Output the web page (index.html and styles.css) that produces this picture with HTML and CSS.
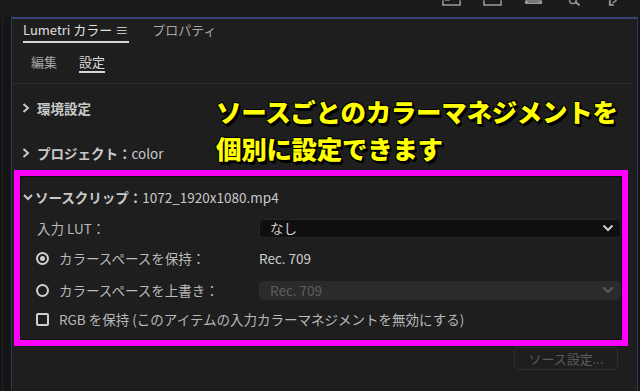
FILE: index.html
```html
<!DOCTYPE html>
<html lang="ja">
<head>
<meta charset="utf-8">
<link rel="stylesheet" href="styles.css">
</head>
<body>
<div class="topbar">
  <svg class="ticon" width="20" height="6" viewBox="0 0 20 6"><path d="M1 0V5H19V0" fill="none" stroke="#9a9a9a" stroke-width="1.6"/><path d="M3 0H8" stroke="#9a9a9a" stroke-width="1.2"/></svg>
  <svg class="ticon" width="20" height="6" viewBox="0 0 20 6"><path d="M1 0V5H19V0" fill="none" stroke="#9a9a9a" stroke-width="1.6"/></svg>
  <svg class="ticon" width="20" height="6" viewBox="0 0 20 6"><rect x="1" y="0" width="18" height="4" rx="1" fill="#9a9a9a"/><path d="M4 2H16" stroke="#555" stroke-width="1"/></svg>
  <svg class="ticon" width="14" height="6" viewBox="0 0 14 6"><circle cx="4" cy="0" r="3.5" fill="none" stroke="#9a9a9a" stroke-width="1.6"/><path d="M7 2L11 5.5" stroke="#9a9a9a" stroke-width="2"/></svg>
  <svg class="ticon last" width="12" height="6" viewBox="0 0 12 6"><path d="M3 0V5H7" fill="none" stroke="#9a9a9a" stroke-width="2"/><path d="M6 3L10 0" stroke="#9a9a9a" stroke-width="1.5"/></svg>
</div>
<div class="main">
  <div class="gutter"></div>
  <div class="panel">
    <div class="tabs">
      <div class="tab active">Lumetri カラー <span class="menu">≡</span></div>
      <div class="tab">プロパティ</div>
    </div>
    <div class="subtabs">
      <div class="subtab">編集</div>
      <div class="subtab active">設定</div>
    </div>
    <div class="content">
      <div class="header first">
        <svg class="chev" width="8" height="10" viewBox="0 0 8 10"><path d="M1.5 1L6 5L1.5 9" fill="none" stroke="#c8c8c8" stroke-width="2"/></svg>
        <span>環境設定</span>
      </div>
      <div class="header second">
        <svg class="chev" width="8" height="10" viewBox="0 0 8 10"><path d="M1.5 1L6 5L1.5 9" fill="none" stroke="#c8c8c8" stroke-width="2"/></svg>
        <span>プロジェクト：</span><span class="light">color</span>
      </div>
      <div class="source">
        <div class="header src">
          <svg class="chev down" width="10" height="8" viewBox="0 0 10 8"><path d="M1 2L5 6L9 2" fill="none" stroke="#c8c8c8" stroke-width="2"/></svg>
          <span>ソースクリップ：</span><span class="light">1072_1920x1080.mp4</span>
        </div>
        <div class="row lut">
          <div class="label plain">入力 LUT：</div>
          <div class="select">
            <span>なし</span>
            <svg width="12" height="8" viewBox="0 0 12 8"><path d="M1.5 1.5L6 6L10.5 1.5" fill="none" stroke="#cfcfcf" stroke-width="2"/></svg>
          </div>
        </div>
        <div class="row r1">
          <div class="label"><span class="radio on"></span>カラースペースを保持：</div>
          <div class="value">Rec. 709</div>
        </div>
        <div class="row r2">
          <div class="label"><span class="radio"></span>カラースペースを上書き：</div>
          <div class="select disabled">
            <span>Rec. 709</span>
            <svg width="12" height="8" viewBox="0 0 12 8"><path d="M1.5 1.5L6 6L10.5 1.5" fill="none" stroke="#5a5a5a" stroke-width="2"/></svg>
          </div>
        </div>
        <div class="row r3">
          <div class="label"><span class="check"></span>RGB を保持 (このアイテムの入力カラーマネジメントを無効にする)</div>
        </div>
      </div>
      <div class="btnrow"><div class="btn">ソース設定...</div></div>
    </div>
    <div class="callout">ソースごとのカラーマネジメントを<br>個別に設定できます</div>
  </div>
  <div class="rgutter"></div>
</div>
</body>
</html>
```
FILE: styles.css
```css
html, body {
  margin: 0;
  padding: 0;
}
body {
  width: 640px;
  height: 391px;
  overflow: hidden;
  background: #171717;
  font-family: "Noto Sans CJK JP", "Noto Sans", sans-serif;
  font-size: 13.5px;
  color: #b9b9b9;
}
.topbar {
  height: 17px;
  background: #1b1b1b;
  display: flex;
  align-items: flex-start;
  padding-left: 442px;
}
.ticon { display: block; margin-right: 22px; }
.ticon:nth-child(3) { margin-right: 26px; }
.ticon:nth-child(4) { margin-right: 24px; }
.main {
  display: flex;
  height: 374px;
}
.gutter {
  width: 11px;
  background: #151515;
  box-shadow: inset -8px 0 0 #151515, inset -9px 0 0 #232323;
}
.rgutter { width: 2px; background: #151515; }
.panel {
  position: relative;
  flex: 1;
  background: #1e1e1e;
  border-top: 2px solid #34437a;
  border-left: 1px solid #2c3a5c;
  border-right: 1px solid #2c3a5c;
}
.tabs {
  display: flex;
  height: 24px;
  padding-left: 11px;
  align-items: flex-end;
  font-size: 13px;
}
.tab {
  height: 24px;
  line-height: 22px;
  color: #a8a8a8;
  box-sizing: border-box;
}
.tab.active {
  color: #e0e0e0;
  border-bottom: 2px solid #d6d6d6;
  margin-right: 23px;
  padding-right: 1px;
}
.subtabs {
  display: flex;
  padding-left: 19px;
  height: 41px;
  box-sizing: border-box;
  border-bottom: 1px solid #2d2d2d;
  margin-right: 7px;
  gap: 22px;
  font-size: 13px;
}
.subtab {
  color: #a8a8a8;
  padding-top: 9px;
  line-height: 20px;
  height: 22px;
}
.subtab.active {
  color: #d8d8d8;
  border-bottom: 2px solid #d6d6d6;
  height: 19px;
}
.content {
  padding-right: 9px;
}
.header {
  display: flex;
  align-items: center;
  font-weight: bold;
  color: #c9c9c9;
  padding-left: 10px;
  height: 20px;
}
.header .light { font-weight: normal; color: #c9c9c9; }
.chev { margin-right: 7px; flex: none; }
.header.first { margin-top: 14px; }
.header.second { margin-top: 25px; }
.source {
  margin-top: 7px;
  margin-left: 2px;
  border: 6px solid #ff00ff;
  box-shadow: inset 0 0 0 1px #111;
  height: 164px;
}
.header.src {
  padding-left: 3px;
  margin-top: 11px;
}
.chev.down { margin-right: 2px; }
.row {
  display: flex;
  align-items: center;
  height: 20px;
}
.label {
  display: flex;
  align-items: center;
  width: 239px;
  box-sizing: border-box;
  padding-left: 16px;
  color: #b9b9b9;
  flex: none;
  white-space: nowrap;
}
.label.plain { padding-left: 17px; }
.row.lut { margin-top: 11px; }
.row.r1 { margin-top: 10px; }
.row.r2 { margin-top: 12px; }
.row.r3 { margin-top: 9px; }
.radio {
  flex: none;
  width: 9px;
  height: 9px;
  border: 2px solid #cfcfcf;
  border-radius: 50%;
  margin-right: 10px;
  position: relative;
}
.radio.on::after {
  content: "";
  position: absolute;
  left: 2px;
  top: 2px;
  width: 5px;
  height: 5px;
  border-radius: 50%;
  background: #cfcfcf;
}
.check {
  flex: none;
  width: 9px;
  height: 9px;
  border: 2px solid #cfcfcf;
  border-radius: 2px;
  margin-right: 10px;
}
.select {
  flex: 1;
  height: 19px;
  background: #0f0f0f;
  border: 1px solid #262626;
  border-radius: 4px;
  display: flex;
  align-items: center;
  justify-content: space-between;
  padding: 0 6px 0 10px;
  color: #cfcfcf;
  box-sizing: border-box;
  margin-right: 1px;
}
.select.disabled {
  background: #2b2b2b;
  border-color: #2b2b2b;
  color: #5e5e5e;
}
.value { color: #cfcfcf; }
.btnrow {
  display: flex;
  justify-content: flex-end;
  margin-top: 1px;
}
.btn {
  width: 104px;
  height: 23px;
  border: 1px solid #2e2e2e;
  border-radius: 4px;
  box-sizing: border-box;
  color: #5c5c5c;
  text-align: center;
  line-height: 21px;
  margin-right: 10px;
  font-size: 13px;
}
.callout {
  position: absolute;
  left: 204px;
  top: 73px;
  font-size: 25.5px;
  font-weight: 900;
  line-height: 37px;
  color: #ffff00;
  letter-spacing: -0.3px;
  text-shadow: 1px 1px 0 #000, -1px -1px 0 #000, 1px -1px 0 #000, -1px 1px 0 #000, 2px 2px 0 #000, 2px 3px 0 #000;
  white-space: nowrap;
}
```
